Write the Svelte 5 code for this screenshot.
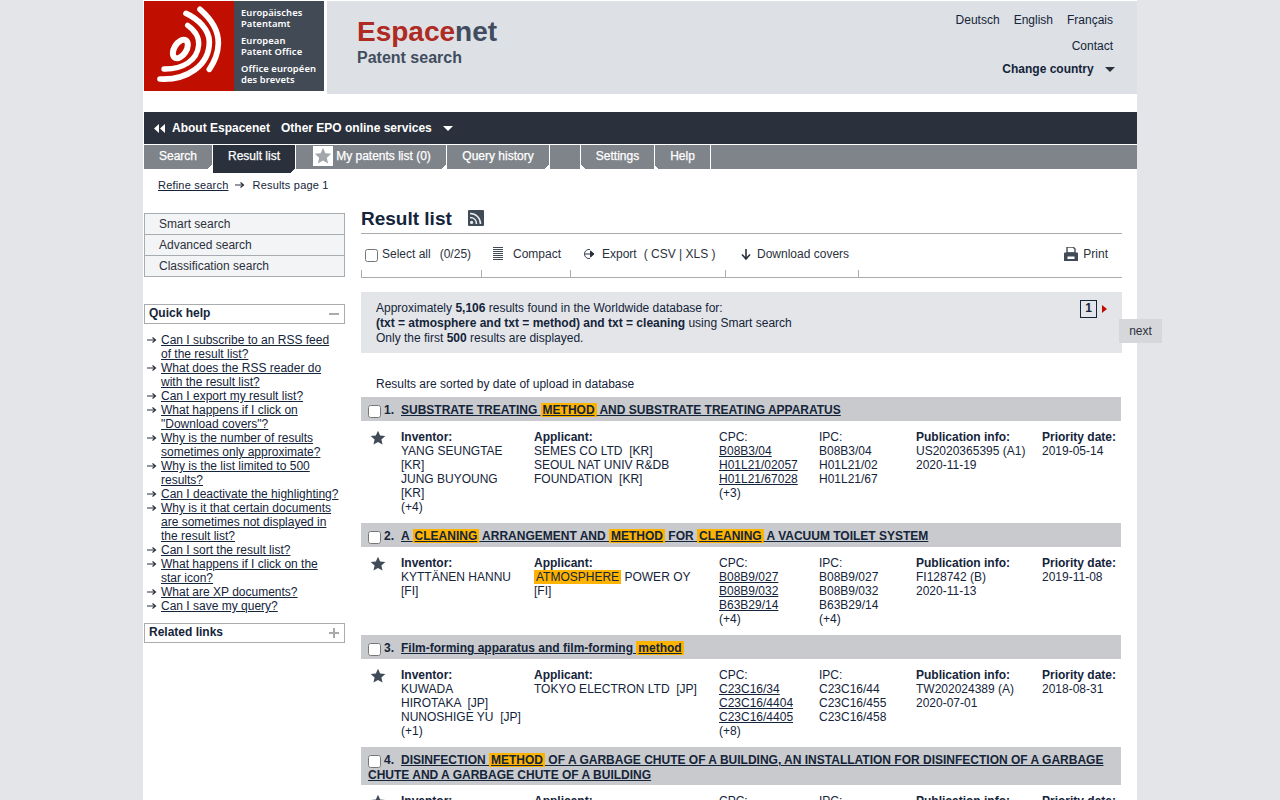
<script>
	const tabs = [
		{ label: 'Search', w: 69, notch: 'right' },
		{ label: 'Result list', w: 83, notch: 'right', active: true },
		{ label: 'My patents list (0)', w: 151, notch: 'right', star: true },
		{ label: 'Query history', w: 103, notch: 'right' },
		{ label: '', w: 31 },
		{ label: 'Settings', w: 74, notch: 'left' },
		{ label: 'Help', w: 56, notch: 'left' }
	];

	const help = [
		'Can I subscribe to an RSS feed of the result list?',
		'What does the RSS reader do with the result list?',
		'Can I export my result list?',
		'What happens if I click on "Download covers"?',
		'Why is the number of results sometimes only approximate?',
		'Why is the list limited to 500 results?',
		'Can I deactivate the highlighting?',
		'Why is it that certain documents are sometimes not displayed in the result list?',
		'Can I sort the result list?',
		'What happens if I click on the star icon?',
		'What are XP documents?',
		'Can I save my query?'
	];

	const results = [
		{
			n: 1,
			title: [['SUBSTRATE TREATING '], ['METHOD', 1], [' AND SUBSTRATE TREATING APPARATUS']],
			inventor: ['YANG SEUNGTAE', '[KR]', 'JUNG BUYOUNG', '[KR]', '(+4)'],
			applicant: [['SEMES CO LTD  [KR]'], ['SEOUL NAT UNIV R&DB'], ['FOUNDATION  [KR]']],
			cpc: ['B08B3/04', 'H01L21/02057', 'H01L21/67028'],
			cpcMore: '(+3)',
			ipc: ['B08B3/04', 'H01L21/02', 'H01L21/67'],
			pub: ['US2020365395 (A1)', '2020-11-19'],
			prio: '2019-05-14'
		},
		{
			n: 2,
			title: [['A '], ['CLEANING', 1], [' ARRANGEMENT AND '], ['METHOD', 1], [' FOR '], ['CLEANING', 1], [' A VACUUM TOILET SYSTEM']],
			inventor: ['KYTTÄNEN HANNU', '[FI]'],
			applicant: [['ATMOSPHERE', 1, ' POWER OY'], ['[FI]']],
			cpc: ['B08B9/027', 'B08B9/032', 'B63B29/14'],
			cpcMore: '(+4)',
			ipc: ['B08B9/027', 'B08B9/032', 'B63B29/14', '(+4)'],
			pub: ['FI128742 (B)', '2020-11-13'],
			prio: '2019-11-08'
		},
		{
			n: 3,
			title: [['Film-forming apparatus and film-forming '], ['method', 1]],
			inventor: ['KUWADA', 'HIROTAKA  [JP]', 'NUNOSHIGE YU  [JP]', '(+1)'],
			applicant: [['TOKYO ELECTRON LTD  [JP]']],
			cpc: ['C23C16/34', 'C23C16/4404', 'C23C16/4405'],
			cpcMore: '(+8)',
			ipc: ['C23C16/44', 'C23C16/455', 'C23C16/458'],
			pub: ['TW202024389 (A)', '2020-07-01'],
			prio: '2018-08-31'
		},
		{
			n: 4,
			title: [['DISINFECTION '], ['METHOD', 1], [' OF A GARBAGE CHUTE OF A BUILDING, AN INSTALLATION FOR DISINFECTION OF A GARBAGE CHUTE AND A GARBAGE CHUTE OF A BUILDING']],
			inventor: [],
			applicant: [],
			cpc: [],
			ipc: [],
			pub: [],
			prio: ''
		}
	];

	const starPath = 'M12 1l3.2 7.2 7.8.8-5.9 5.2 1.7 7.7L12 18l-6.8 3.9 1.7-7.7L1 9l7.8-.8z';
</script>

{#snippet arrow()}
	<svg class="arrow" width="10" height="8" viewBox="0 0 10 8"><path d="M0 4h8M5.5 1.5L8.5 4 5.5 6.5" fill="none" stroke="#2b313c" stroke-width="1.2" /></svg>
{/snippet}

<div class="page">
	<header class="top">
		<div class="logo">
			<div class="logo-mark">
				<svg width="90" height="90" viewBox="-18 0 270 270">
					<g fill="none" stroke="#fff" stroke-linecap="round">
						<ellipse cx="91" cy="144" rx="18" ry="31" transform="rotate(32 91 144)" stroke-width="18" />
						<path d="M42 204C100 205 142 178 146 132 148 108 134 88 113 73" stroke-width="16" />
						<path d="M30 234C110 238 178 194 178 122 178 88 146 54 108 37" stroke-width="17" />
						<path d="M150 25C186 56 206 92 205 128 204 156 194 182 178 205" stroke-width="17" />
					</g>
				</svg>
			</div>
			<div class="logo-text">
				<p>Europäisches<br />Patentamt</p>
				<p>European<br />Patent Office</p>
				<p>Office européen<br />des brevets</p>
			</div>
		</div>
		<div class="brand">
			<div class="brand-text">
				<div class="wordmark"><span class="red">Espace</span>net</div>
				<div class="subtitle">Patent search</div>
			</div>
			<div class="top-links">
				<div class="langs"><span>Deutsch</span><span>English</span><span>Français</span></div>
				<div>Contact</div>
				<div class="country">Change country <i class="caret dark"></i></div>
			</div>
		</div>
	</header>

	<nav class="mainnav">
		<svg width="11" height="9" viewBox="0 0 11 9"><path d="M5 0v9L0 4.5zM11 0v9L6 4.5z" fill="#fff" /></svg>
		<span class="about">About Espacenet</span>
		<span>Other EPO online services</span>
		<i class="caret"></i>
	</nav>

	<div class="tabs">
		{#each tabs as t}
			<div class="tab {t.notch ? 'notch-' + t.notch : ''}" class:active={t.active} style="width: {t.w}px">
				{#if t.star}
					<span class="tab-star"><svg width="18" height="18" viewBox="0 0 24 24"><path d={starPath} fill="#a3a7ac" /></svg></span>
				{/if}
				{t.label}
			</div>
		{/each}
	</div>

	<div class="crumbs">
		<a href="#top">Refine search</a>
		{@render arrow()}
		<span>Results page 1</span>
	</div>

	<div class="columns">
		<aside class="side">
			<ul class="searches">
				<li>Smart search</li>
				<li>Advanced search</li>
				<li>Classification search</li>
			</ul>

			<div class="box-head">Quick help <i class="minus"></i></div>
			<ul class="help">
				{#each help as h}
					<li>{@render arrow()}<a href="#top">{h}</a></li>
				{/each}
			</ul>

			<div class="box-head">Related links <i class="plus"></i></div>
		</aside>

		<main class="main">
			<h1>
				Result list
				<svg width="16" height="16" viewBox="0 0 16 16">
					<rect width="16" height="16" rx="1" fill="#414b58" />
					<g fill="none" stroke="#e8eaec" stroke-width="1.6">
						<path d="M2 3.5C8 3.5 12.5 8 12.5 14" />
						<path d="M2 7.5C5.8 7.5 8.5 10.2 8.5 14" />
					</g>
					<circle cx="3.6" cy="12.4" r="1.6" fill="#e8eaec" />
				</svg>
			</h1>

			<div class="tools">
				<label class="select-all"><input type="checkbox" /> Select all <span class="count">(0/25)</span></label>
				<span class="tool compact">
					<svg width="10" height="14" viewBox="0 0 10 14"><path d="M0 .5h10M0 2.5h10M0 4.5h10M0 6.5h10M0 8.5h10M0 10.5h10M0 12.5h10" stroke="#414b58" stroke-width="1" /></svg>
					Compact
				</span>
				<span class="tool export">
					<svg width="14" height="12" viewBox="0 0 14 12"><path d="M8 1.5A4.6 4.6 0 1 0 8 10.5" fill="none" stroke="#414b58" stroke-width="1" /><path d="M3 6h8M8.5 3l3.5 3-3.5 3z" fill="#2b313c" stroke="#2b313c" /></svg>
					Export <span class="formats">( CSV | XLS )</span>
				</span>
				<span class="tool download">
					<svg width="10" height="11" viewBox="0 0 10 11"><path d="M5 0v9M1 5.5L5 10l4-4.5" fill="none" stroke="#2b313c" stroke-width="1.6" /></svg>
					Download covers
				</span>
				<span class="tool print">
					<svg width="14" height="14" viewBox="0 0 14 14"><path d="M3 0h6l2 2v4H3z" fill="none" stroke="#414b58" stroke-width="1.4" /><path d="M0 6.5a1 1 0 0 1 1-1h12a1 1 0 0 1 1 1V14H0z" fill="#414b58" /><rect x="3.5" y="9.5" width="7" height="2.5" fill="#fff" /></svg>
					Print
				</span>
			</div>
			<div class="ticks"><span></span><span></span><span></span><span></span><span></span></div>

			<section class="info">
				<div>
					Approximately <b>5,106</b> results found in the Worldwide database for:<br />
					<b>(txt = atmosphere and txt = method) and txt = cleaning</b> using Smart search<br />
					Only the first <b>500</b> results are displayed.
				</div>
				<div class="pager"><span class="page-no">1</span><i class="next-arrow"></i></div>
				<div class="next-tab">next</div>
			</section>

			<p class="sorted">Results are sorted by date of upload in database</p>

			{#each results as r}
				<article class="result">
					<div class="result-head">
						<input type="checkbox" />
						<b class="num">{r.n}.</b>
						<a href="#top">{#each r.title as [text, hit]}{#if hit}<mark>{text}</mark>{:else}{text}{/if}{/each}</a>
					</div>
					<div class="result-body">
						<svg class="star" width="16" height="16" viewBox="0 0 24 24"><path d={starPath} fill="#414b58" /></svg>
						<div>
							<b>Inventor:</b>
							{#each r.inventor as line}<div>{line}</div>{/each}
						</div>
						<div>
							<b>Applicant:</b>
							{#each r.applicant as [text, hit, rest]}
								<div>{#if hit}<mark>{text}</mark>{rest}{:else}{text}{/if}</div>
							{/each}
						</div>
						<div>
							CPC:
							{#each r.cpc as c}<div><a href="#top">{c}</a></div>{/each}
							{#if r.cpcMore}<div>{r.cpcMore}</div>{/if}
						</div>
						<div>
							IPC:
							{#each r.ipc as c}<div>{c}</div>{/each}
						</div>
						<div>
							<b>Publication info:</b>
							{#each r.pub as p}<div>{p}</div>{/each}
						</div>
						<div>
							<b>Priority date:</b>
							<div>{r.prio}</div>
						</div>
					</div>
				</article>
			{/each}
		</main>
	</div>
</div>

<style>
	:global(body) {
		margin: 0;
		background: #e3e5e8;
		font-family: 'Liberation Sans', Arial, sans-serif;
		font-size: 12px;
		line-height: 14px;
		color: #14243a;
		height: 800px;
		overflow: hidden;
	}

	a {
		color: inherit;
	}

	.page {
		width: 994px;
		height: 800px;
		margin-left: 143px;
		background: #fff;
	}

	.top {
		display: flex;
		height: 93px;
		padding: 1px 0 0 1px;
	}

	.logo {
		display: flex;
		width: 180px;
		height: 90px;
		background: #424a56;
	}

	.logo-mark {
		width: 90px;
		height: 90px;
		background: #c00f00;
	}

	.logo-text {
		padding: 6px 0 0 7px;
		color: #fff;
		font-family: 'Noto Sans', sans-serif;
		font-size: 9.4px;
		font-weight: 600;
		line-height: 11px;
		letter-spacing: 0.1px;
	}

	.logo-text p {
		margin: 0 0 6px;
	}

	.brand {
		flex: 1;
		display: flex;
		justify-content: space-between;
		margin-left: 3px;
		background: #dde0e4;
		padding: 0 24px 0 30px;
	}

	.brand-text {
		padding-top: 14px;
		color: #414d5e;
	}

	.wordmark {
		font-size: 28px;
		line-height: 34px;
		font-weight: bold;
	}

	.red {
		color: #ae2a22;
	}

	.subtitle {
		font-size: 16px;
		line-height: 18px;
		font-weight: bold;
	}

	.top-links {
		display: flex;
		flex-direction: column;
		align-items: flex-end;
		padding-top: 12px;
		gap: 12px;
	}

	.langs {
		display: flex;
		gap: 14px;
	}

	.country {
		font-weight: bold;
		margin: -3px -2px 0 0;
	}

	.caret {
		display: inline-block;
		margin-left: 11px;
		border: 5px solid transparent;
		border-top: 5px solid #fff;
		border-bottom: 0;
		vertical-align: 2px;
	}

	.caret.dark {
		border-top-color: #2b313c;
		margin-left: 8px;
		vertical-align: 1px;
	}

	.mainnav {
		display: flex;
		align-items: center;
		height: 32px;
		margin: 18px 0 0 1px;
		padding-left: 10px;
		background: #2b313c;
		color: #fff;
		font-weight: bold;
	}

	.about {
		margin: 0 11px 0 7px;
	}

	.tabs {
		display: flex;
		height: 24px;
		margin: 1px 0 0 1px;
		background: #7f848a;
		color: #fff;
		-webkit-text-stroke: 0.25px #fff;
	}

	.tab {
		position: relative;
		box-sizing: border-box;
		display: flex;
		align-items: center;
		justify-content: center;
		height: 24px;
		border-right: 1px solid #fff;
		padding-bottom: 3px;
	}

	.tab.active {
		height: 28px;
		padding-bottom: 7px;
		background: #2b313c;
	}

	.notch-right::after,
	.notch-left::after {
		content: '';
		position: absolute;
		bottom: 0;
		width: 4px;
		height: 4px;
	}

	.notch-right::after {
		right: 0;
		background: linear-gradient(135deg, transparent 50%, #fff 50%);
	}

	.notch-left::after {
		left: 0;
		background: linear-gradient(225deg, transparent 50%, #fff 50%);
	}

	.tab-star {
		display: flex;
		align-items: center;
		justify-content: center;
		width: 20px;
		height: 20px;
		margin: 0 3px 0 2px;
		background: #fff;
	}

	.crumbs {
		display: flex;
		align-items: center;
		height: 14px;
		margin: 9px 0 0 15px;
		font-size: 11px;
		letter-spacing: 0.2px;
	}

	.crumbs .arrow {
		margin: 0 7px;
	}

	.columns {
		display: flex;
		margin: 17px 0 0 1px;
	}

	.side {
		width: 201px;
		margin-right: 16px;
		flex: none;
	}

	.searches {
		list-style: none;
		margin: 4px 0 27px;
		padding: 0;
		border: 1px solid #a9acaf;
		background: #f3f4f6;
		color: #2b313c;
	}

	.searches li {
		height: 20px;
		line-height: 20px;
		padding-left: 14px;
		border-bottom: 1px solid #a9acaf;
	}

	.searches li:last-child {
		border-bottom: 0;
	}

	.box-head {
		position: relative;
		height: 18px;
		line-height: 16px;
		padding-left: 4px;
		border: 1px solid #a9acaf;
		font-weight: bold;
	}

	.minus,
	.plus {
		position: absolute;
		right: 5px;
		top: 8px;
		width: 10px;
		height: 2px;
		background: #a9acaf;
	}

	.plus::after {
		content: '';
		position: absolute;
		left: 4px;
		top: -4px;
		width: 2px;
		height: 10px;
		background: #a9acaf;
	}

	.help {
		list-style: none;
		margin: 9px 0 10px;
		padding: 0 6px 0 17px;
	}

	.help li {
		position: relative;
	}

	.help .arrow {
		position: absolute;
		left: -14px;
		top: 3px;
	}

	.main {
		width: 761px;
		position: relative;
	}

	h1 {
		display: flex;
		align-items: center;
		gap: 16px;
		margin: 0;
		height: 20px;
		font-size: 19px;
		line-height: 20px;
		font-weight: bold;
		color: #14243a;
	}

	h1 svg {
		margin-top: -2px;
	}

	.tools {
		position: relative;
		display: flex;
		align-items: center;
		height: 37px;
		margin-top: 4px;
		padding-top: 4px;
		border-top: 1px solid #a9acaf;
		box-sizing: border-box;
		color: #2b313c;
	}

	.select-all {
		display: flex;
		align-items: center;
		gap: 4px;
		width: 128px;
		margin-left: 4px;
		flex: none;
	}

	.select-all input {
		margin: 2px 0 0;
	}

	.count {
		margin-left: 5px;
	}

	.tool {
		display: flex;
		align-items: center;
		flex: none;
	}

	.compact {
		width: 89px;
		gap: 10px;
	}

	.export {
		width: 159px;
		gap: 6px;
	}

	.formats {
		margin-left: 1px;
	}

	.download {
		gap: 6px;
	}

	.print {
		position: absolute;
		right: 14px;
		gap: 5px;
	}

	.ticks {
		display: grid;
		grid-template-columns: 120px 89px 155px 133px 1fr;
		height: 8px;
		border-bottom: 1px solid #a9acaf;
		box-sizing: border-box;
	}

	.ticks span {
		border-left: 1px solid #a9acaf;
	}

	.info {
		position: relative;
		display: flex;
		justify-content: space-between;
		height: 61px;
		margin-top: 14px;
		padding: 9px 15px 0 15px;
		box-sizing: border-box;
		background: #e3e5e8;
		line-height: 15px;
	}

	.pager {
		display: flex;
		align-items: center;
		gap: 5px;
		height: 18px;
		margin-top: -1px;
	}

	.page-no {
		box-sizing: border-box;
		width: 17px;
		height: 18px;
		line-height: 15px;
		border: 1px solid #14243a;
		text-align: center;
		font-weight: bold;
	}

	.next-arrow {
		border-left: 5px solid #c00f00;
		border-top: 4px solid transparent;
		border-bottom: 4px solid transparent;
	}

	.next-tab {
		position: absolute;
		left: 758px;
		top: 27px;
		width: 43px;
		height: 24px;
		line-height: 24px;
		text-align: center;
		background: #d5d7da;
		color: #2b313c;
	}

	.sorted {
		margin: 24px 0 6px 15px;
	}

	.result-head {
		position: relative;
		box-sizing: border-box;
		min-height: 24px;
		margin-right: 1px;
		padding: 6px 7px 2px 7px;
		text-indent: 33px;
		background: #c8cacd;
		font-weight: bold;
		line-height: 15px;
	}

	.result-head input {
		position: absolute;
		left: 7px;
		top: 8px;
		margin: 0;
	}

	.num {
		position: absolute;
		left: 23px;
		text-indent: 0;
	}

	mark {
		background: #fdb300;
		color: inherit;
		padding: 0 2px;
	}

	.result-body {
		position: relative;
		display: grid;
		grid-template-columns: 133px 185px 100px 97px 126px 1fr;
		padding: 9px 0 9px 40px;
		min-height: 70px;
	}

	.star {
		position: absolute;
		left: 9px;
		top: 9px;
	}

	.result-body > div > div {
		white-space: pre-wrap;
	}
</style>
